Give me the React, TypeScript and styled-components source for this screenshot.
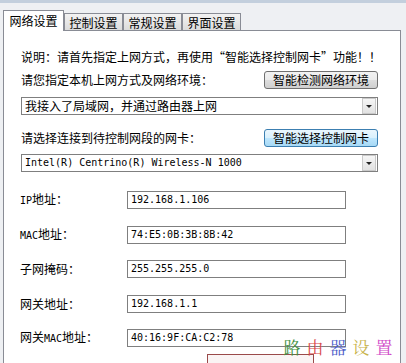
import React from "react";
import styled, { createGlobalStyle } from "styled-components";

const Global = createGlobalStyle`
  html, body { margin: 0; padding: 0; background: #eef0f3; }
  body {
    font-family: "Noto Sans CJK SC", "Liberation Sans", sans-serif;
    font-size: 12px;
    color: #000;
  }
`;

const Window = styled.div`
  position: relative;
  width: 406px;
  height: 363px;
  overflow: hidden;
  box-sizing: border-box;
  border-top: 3px solid #c3cfdd;
  background: #eef0f3;
`;

const TabBar = styled.div`
  display: flex;
  align-items: flex-end;
  height: 20px;
  margin-top: 7px;
  padding-left: 3px;
  position: relative;
  z-index: 1;
`;

const Tab = styled.div<{ $active?: boolean }>`
  box-sizing: border-box;
  width: ${(p) => (p.$active ? 61 : 59)}px;
  height: ${(p) => (p.$active ? 21 : 17)}px;
  margin-bottom: ${(p) => (p.$active ? -1 : 0)}px;
  border: 1px solid #898c95;
  border-bottom: none;
  background: ${(p) =>
    p.$active ? "#ffffff" : "linear-gradient(#f2f2f2, #dcdcdc)"};
  display: flex;
  align-items: center;
  justify-content: center;
  font-size: 12px;
  line-height: 16px;
  padding-top: ${(p) => (p.$active ? 0 : 1)}px;
`;

const Panel = styled.div`
  box-sizing: border-box;
  width: 398px;
  height: 340px;
  margin-left: 3px;
  border: 1px solid #898c95;
  background: #ffffff;
  padding: 18px 0 0 17px;
  display: flex;
  flex-direction: column;
`;

const Note = styled.div`
  height: 16px;
  line-height: 16px;
  white-space: nowrap;
`;

const Quote = styled.span<{ $open?: boolean }>`
  display: inline-block;
  width: 12px;
  text-align: ${(p) => (p.$open ? "right" : "left")};
`;

const LabelRow = styled.div<{ $top: number }>`
  display: flex;
  align-items: center;
  justify-content: space-between;
  width: 357px;
  height: 18px;
  margin-top: ${(p) => p.$top}px;
`;

const Label = styled.span`
  line-height: 16px;
  white-space: nowrap;
`;

const Button = styled.div<{ $hot?: boolean }>`
  box-sizing: border-box;
  width: 114px;
  height: 18px;
  border: 1px solid ${(p) => (p.$hot ? "#3c7fb1" : "#707070")};
  border-radius: 3px;
  background: ${(p) =>
    p.$hot
      ? "linear-gradient(#eaf6fd 0%, #d9f0fc 50%, #bee6fd 51%, #a7d9f5 100%)"
      : "linear-gradient(#f2f2f2 0%, #ebebeb 50%, #dddddd 51%, #cfcfcf 100%)"};
  display: flex;
  align-items: center;
  justify-content: center;
  line-height: 16px;
  white-space: nowrap;
`;

const Select = styled.div<{ $top: number }>`
  box-sizing: border-box;
  width: 357px;
  height: 20px;
  margin-top: ${(p) => p.$top}px;
  border: 1px solid #7f7f7f;
  background: #fff;
  display: flex;
  align-items: center;
  justify-content: space-between;
  padding: 0 1px 0 3px;
`;

const SelectText = styled.span<{ $mono?: boolean }>`
  font-family: ${(p) =>
    p.$mono
      ? '"DejaVu Sans Mono", "Liberation Mono", monospace'
      : '"Noto Sans CJK SC", sans-serif'};
  font-size: ${(p) => (p.$mono ? 10 : 12)}px;
  line-height: 16px;
  white-space: nowrap;
`;

const ArrowBox = styled.div`
  box-sizing: border-box;
  width: 14px;
  height: 16px;
  border: 1px solid #c9c9c9;
  background: linear-gradient(#f6f6f6, #e2e2e2);
  display: flex;
  align-items: center;
  justify-content: center;
`;

const Arrow = styled.div`
  width: 0;
  height: 0;
  border-left: 3px solid transparent;
  border-right: 3px solid transparent;
  border-top: 3px solid #222;
`;

const FieldGrid = styled.div`
  display: grid;
  grid-template-columns: 107px 219px;
  grid-auto-rows: 18px;
  row-gap: 16.5px;
  margin-top: 19px;
  margin-left: -1px;
  align-items: center;
`;

const FieldLabel = styled.span`
  line-height: 16px;
  white-space: nowrap;
`;

const Latin = styled.span`
  font-family: "DejaVu Sans Mono", "Liberation Mono", monospace;
  font-size: 10px;
`;

const Field = styled.div`
  box-sizing: border-box;
  height: 18px;
  border: 1px solid #7f7f7f;
  background: #fff;
  padding-left: 3px;
  font-family: "DejaVu Sans Mono", "Liberation Mono", monospace;
  font-size: 10px;
  line-height: 16px;
  white-space: nowrap;
`;

const PartialButton = styled.div`
  box-sizing: border-box;
  width: 107px;
  height: 24px;
  margin: 7px 0 0 186px;
  border: 1px solid #9a4a4a;
  background: #faf4f4;
`;

const Watermark = styled.div`
  position: absolute;
  left: 283px;
  top: 334px;
  display: flex;
  gap: 5px;
  font-family: "AR PL UKai CN", "Noto Serif CJK SC", "Noto Sans CJK SC", serif;
  font-size: 17px;
  line-height: 20px;
`;

const WChar = styled.span<{ $c: string }>`
  color: ${(p) => p.$c};
  width: 18px;
  text-align: center;
`;

const fields: { label: React.ReactNode; value: string }[] = [
  { label: <><Latin>IP</Latin>地址：</>, value: "192.168.1.106" },
  { label: <><Latin>MAC</Latin>地址：</>, value: "74:E5:0B:3B:8B:42" },
  { label: "子网掩码：", value: "255.255.255.0" },
  { label: "网关地址：", value: "192.168.1.1" },
  { label: <>网关<Latin>MAC</Latin>地址：</>, value: "40:16:9F:CA:C2:78" },
];

const marks = [
  { ch: "路", c: "#3f8f3f" },
  { ch: "由", c: "#d84848" },
  { ch: "器", c: "#4c5cc8" },
  { ch: "设", c: "#c8b34a" },
  { ch: "置", c: "#d048c8" },
];

export default function App() {
  return (
    <>
      <Global />
      <Window>
        <TabBar>
          <Tab $active>网络设置</Tab>
          <Tab>控制设置</Tab>
          <Tab>常规设置</Tab>
          <Tab>界面设置</Tab>
        </TabBar>
        <Panel>
          <Note>
            说明：请首先指定上网方式，再使用<Quote $open>“</Quote>智能选择控制网卡
            <Quote>”</Quote>功能！！
          </Note>
          <LabelRow $top={6}>
            <Label>请您指定本机上网方式及网络环境：</Label>
            <Button>智能检测网络环境</Button>
          </LabelRow>
          <Select $top={8}>
            <SelectText>我接入了局域网，并通过路由器上网</SelectText>
            <ArrowBox>
              <Arrow />
            </ArrowBox>
          </Select>
          <LabelRow $top={14}>
            <Label>请选择连接到待控制网段的网卡：</Label>
            <Button $hot>智能选择控制网卡</Button>
          </LabelRow>
          <Select $top={7}>
            <SelectText $mono>Intel(R) Centrino(R) Wireless-N 1000</SelectText>
            <ArrowBox>
              <Arrow />
            </ArrowBox>
          </Select>
          <FieldGrid>
            {fields.map((f, i) => (
              <React.Fragment key={i}>
                <FieldLabel>{f.label}</FieldLabel>
                <Field>{f.value}</Field>
              </React.Fragment>
            ))}
          </FieldGrid>
          <PartialButton />
        </Panel>
        <Watermark>
          {marks.map((m) => (
            <WChar key={m.ch} $c={m.c}>
              {m.ch}
            </WChar>
          ))}
        </Watermark>
      </Window>
    </>
  );
}
